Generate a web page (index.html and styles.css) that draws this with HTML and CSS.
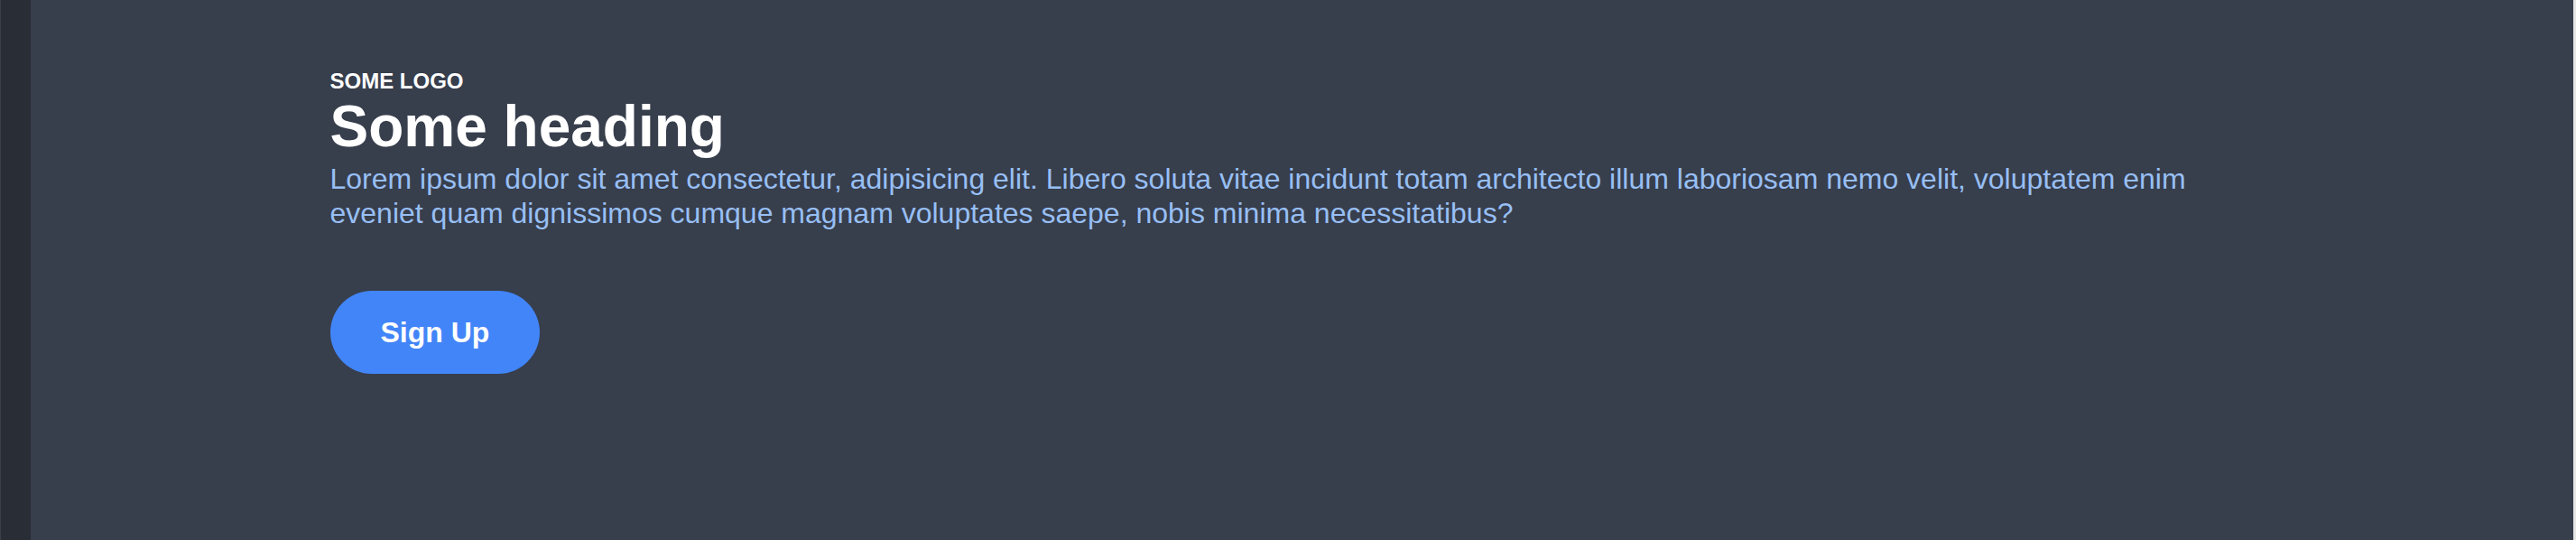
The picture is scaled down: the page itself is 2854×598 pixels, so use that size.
FILE: index.html
```html
<!DOCTYPE html>
<html lang="en">
<head>
<meta charset="utf-8">
<title>Some heading</title>
<link rel="stylesheet" href="styles.css">
</head>
<body>
<div class="page">
  <div class="side"></div>
  <main class="main">
    <section class="hero">
      <div class="logo">SOME LOGO</div>
      <h1 class="heading">Some heading</h1>
      <p class="lead">Lorem ipsum dolor sit amet consectetur, adipisicing elit. Libero soluta vitae incidunt totam architecto illum laboriosam nemo velit, voluptatem enim eveniet quam dignissimos cumque magnam voluptates saepe, nobis minima necessitatibus?</p>
      <div class="actions"><button class="btn">Sign Up</button></div>
    </section>
  </main>
  <div class="edge"></div>
</div>
</body>
</html>
```
FILE: styles.css
```css
html, body {
  margin: 0;
  padding: 0;
  height: 100%;
}
body {
  font-family: "Liberation Sans", Arial, sans-serif;
  background: #374050;
}
.page {
  display: flex;
  height: 598px;
}
.side {
  width: 33px;
  flex: none;
  background: #282d36;
  border-left: 1px solid #3a3f48;
}
.edge {
  width: 3px;
  flex: none;
  background: #e6e6e6;
}
.main {
  flex: 1;
  background: #373e4c;
  padding-top: 78px;
}
.hero {
  max-width: 2154px;
  margin: 0 auto;
  display: flex;
  flex-direction: column;
  align-items: flex-start;
}
.logo {
  font-size: 24px;
  line-height: 24px;
  font-weight: 700;
  color: #ffffff;
}
.heading {
  margin: 6px 0 0;
  font-size: 64px;
  line-height: 64px;
  font-weight: 700;
  color: #ffffff;
}
.lead {
  margin: 7px 0 0;
  font-size: 32px;
  line-height: 38.4px;
  color: #97bff4;
}
.actions {
  margin-top: 66px;
}
.btn {
  height: 92px;
  padding: 0 56px;
  border: none;
  border-radius: 46px;
  background: #4285f8;
  color: #ffffff;
  font-family: "Liberation Sans", Arial, sans-serif;
  font-size: 32px;
  font-weight: 700;
  line-height: 1;
  cursor: pointer;
}
```
